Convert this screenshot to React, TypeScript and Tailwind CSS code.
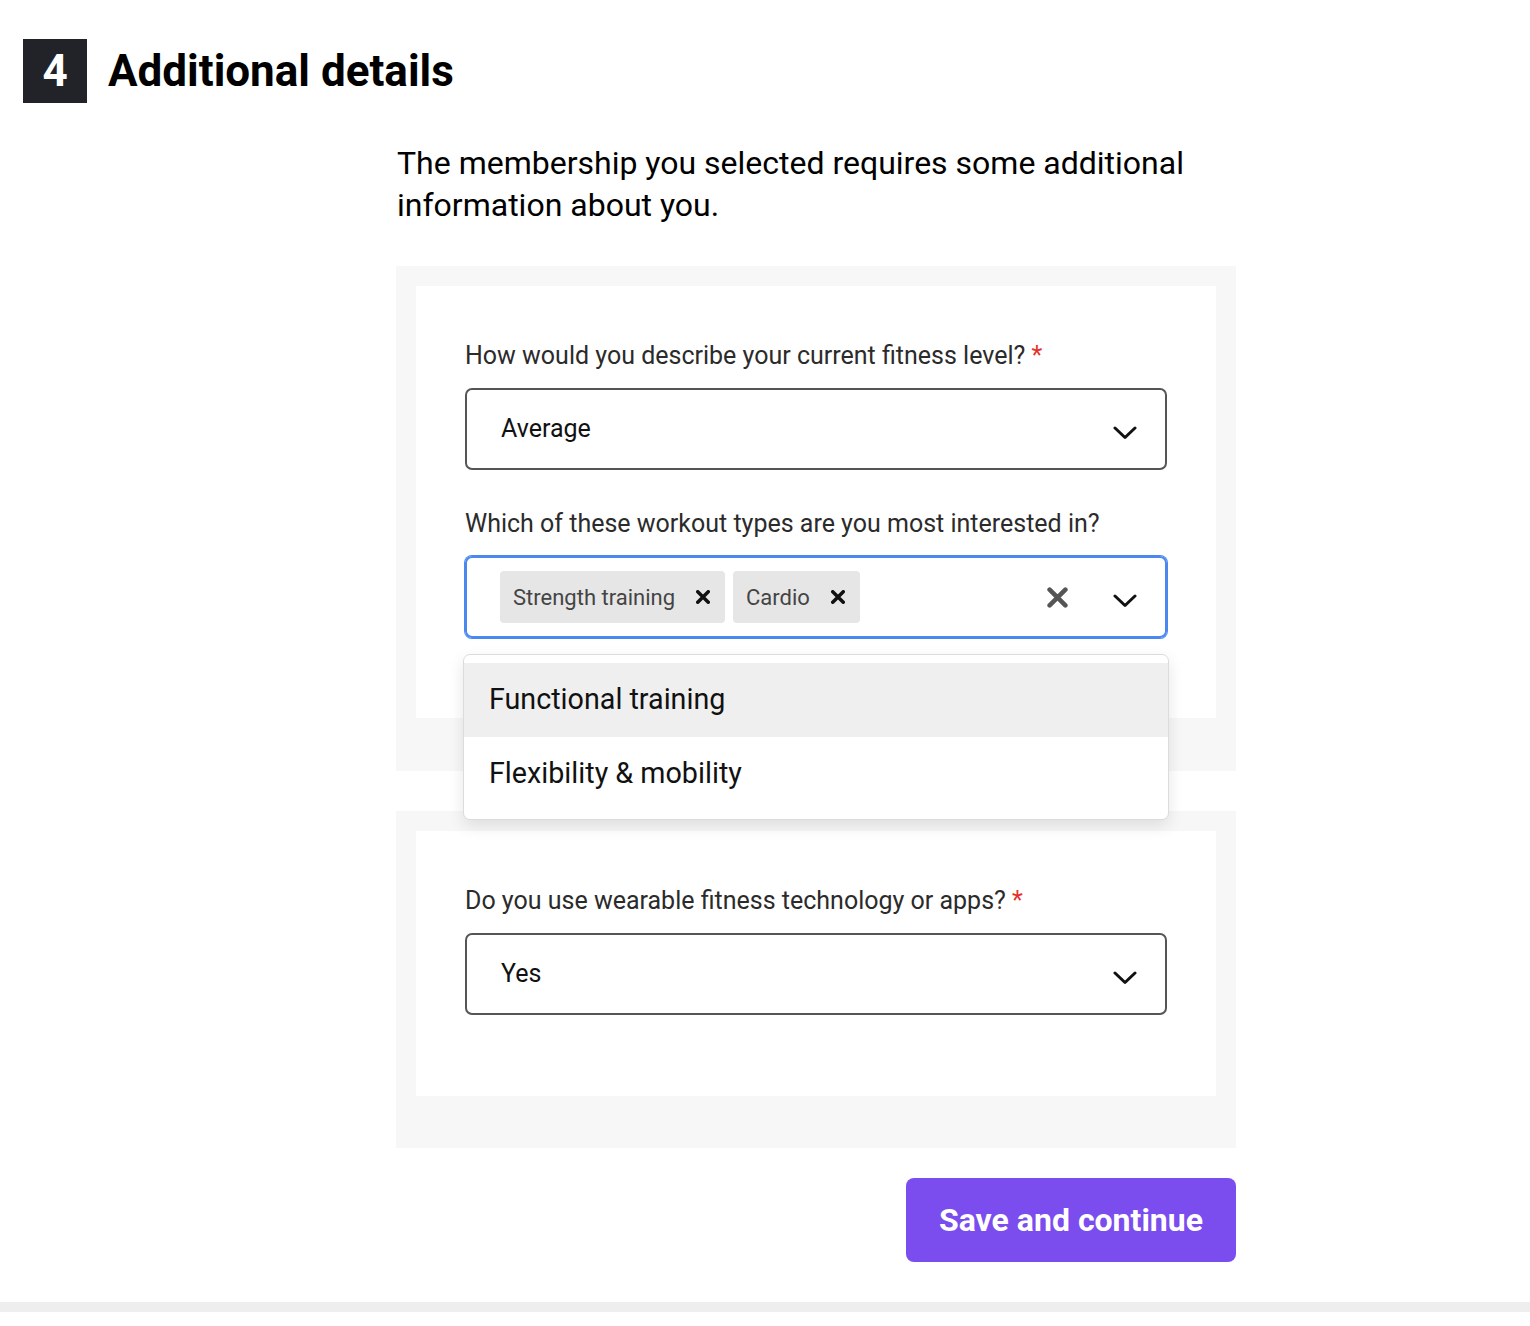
import React from "react";

function Chevron() {
  return (
    <svg width="24" height="14" viewBox="0 0 24 14" fill="none" className="mt-[8px]">
      <path d="M2 2 L12 11.5 L22 2" stroke="#111" strokeWidth="3" strokeLinecap="round" strokeLinejoin="round" />
    </svg>
  );
}

function SmallX({ color = "#111", size = 12, width = 3 }: { color?: string; size?: number; width?: number }) {
  return (
    <svg width={size} height={size} viewBox="0 0 12 12" fill="none">
      <path d="M1.5 1.5 L10.5 10.5 M10.5 1.5 L1.5 10.5" stroke={color} strokeWidth={width} strokeLinecap="round" />
    </svg>
  );
}

function Chip({ label }: { label: string }) {
  return (
    <div className="flex h-[52px] items-center rounded-[4px] bg-[#e6e6e6] pl-[13px] pr-[15px]">
      <span className="text-[22px] text-[#444]">{label}</span>
      <span className="ml-[21px] flex items-center">
        <SmallX size={14} width={3} />
      </span>
    </div>
  );
}

export default function App() {
  return (
    <div className="min-h-[1326px] bg-white font-['Roboto',sans-serif] text-black">
      <header className="flex items-center gap-[21px] pl-[23px] pt-[39px]">
        <div className="flex h-16 w-16 items-center justify-center bg-[#222229] text-[44px] font-bold leading-none text-white">
          4
        </div>
        <h1 className="text-[44px] font-bold leading-none text-black">Additional details</h1>
      </header>

      <main className="ml-[396px] w-[840px]">
        <p className="mt-[39px] pl-px text-[32px] leading-[42px] text-black">
          The membership you selected requires some additional
          <br />
          information about you.
        </p>

        <section className="mt-10 bg-[#f7f7f7] p-5 pb-[53px]">
          <div className="bg-white px-[49px] pb-[80px] pt-[54px]">
            <label className="block text-[25px] leading-8 text-[#2b2b2b]">
              How would you describe your current fitness level? <span className="text-[#e4322b]">*</span>
            </label>
            <div className="mt-[16px] flex h-[82px] items-center justify-between rounded-[7px] border-2 border-[#555] pl-[34px] pr-[28px]">
              <span className="text-[25px] text-[#111]">Average</span>
              <Chevron />
            </div>

            <label className="mt-[38px] block text-[25px] leading-8 text-[#2b2b2b]">
              Which of these workout types are you most interested in?
            </label>
            <div className="relative mt-4">
              <div className="flex h-[82px] items-center rounded-[7px] border-2 border-[#4a88f0] pl-[33px] pr-[28px] shadow-[0_0_0_1px_#4a88f0]">
                <div className="flex flex-1 items-center gap-[8px]">
                  <Chip label="Strength training" />
                  <Chip label="Cardio" />
                </div>
                <span className="mr-[45px] flex items-center">
                  <SmallX color="#555" size={21} width={2.6} />
                </span>
                <Chevron />
              </div>

              <div className="absolute left-[-2px] right-[-2px] top-[98px] z-10 rounded-[7px] border border-[#dcdcdc] bg-white py-2 shadow-[0_6px_16px_rgba(0,0,0,0.10)]">
                <div className="flex h-[74px] items-center bg-[#efefef] pl-[25px] text-[28.7px] text-[#111]">
                  Functional training
                </div>
                <div className="flex h-[74px] items-center pl-[25px] text-[28.7px] text-[#111]">
                  Flexibility &amp; mobility
                </div>
              </div>
            </div>
          </div>
        </section>

        <section className="mt-10 bg-[#f7f7f7] p-5 pb-[52px]">
          <div className="bg-white px-[49px] pb-[81px] pt-[54px]">
            <label className="block text-[25px] leading-8 text-[#2b2b2b]">
              Do you use wearable fitness technology or apps? <span className="text-[#e4322b]">*</span>
            </label>
            <div className="mt-[16px] flex h-[82px] items-center justify-between rounded-[7px] border-2 border-[#555] pl-[34px] pr-[28px]">
              <span className="text-[25px] text-[#111]">Yes</span>
              <Chevron />
            </div>
          </div>
        </section>

        <div className="mt-[30px] flex justify-end">
          <button className="flex h-[84px] w-[330px] items-center justify-center rounded-[8px] bg-[#7b4cee] text-[32px] font-bold text-white">
            Save and continue
          </button>
        </div>
      </main>

      <div className="mt-10 h-[10px] w-full bg-[#eeeeee]" />
    </div>
  );
}
